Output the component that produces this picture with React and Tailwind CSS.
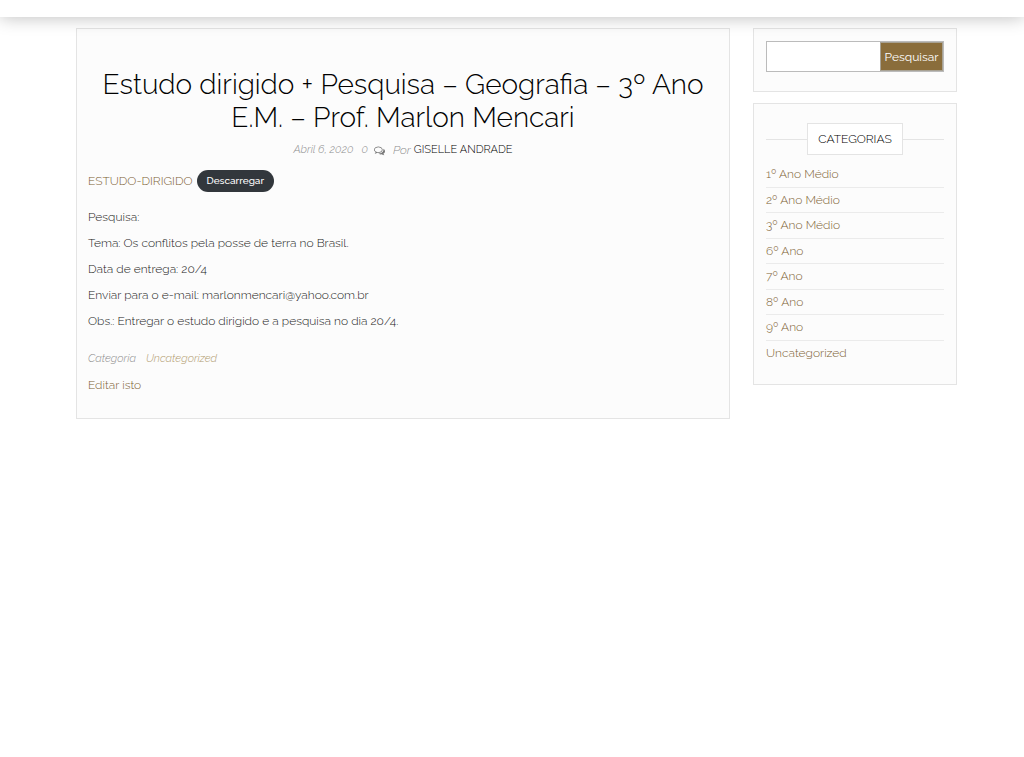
import React, { useState } from "react";

const CATEGORIES = [
  "1º Ano Médio",
  "2º Ano Médio",
  "3º Ano Médio",
  "6º Ano",
  "7º Ano",
  "8º Ano",
  "9º Ano",
  "Uncategorized",
];

const PARAGRAPHS = [
  "Pesquisa:",
  "Tema: Os conflitos pela posse de terra no Brasil.",
  "Data de entrega: 20/4",
  "Enviar para o e-mail: marlonmencari@yahoo.com.br",
  "Obs.: Entregar o estudo dirigido e a pesquisa no dia 20/4.",
];

// dois balões, o de trás preenchido
const CommentsIcon = () => (
  <svg viewBox="0 0 1792 1792" className="size-[11px] fill-[#777]" role="img" aria-label="comentários">
    <path d="M704 384q-153 0-286 52t-211.500 141-78.500 191q0 82 53 158t149 132l97 56-35 84q34-20 62-39l44-31 53 10q78 14 153 14 153 0 286-52t211.500-141 78.500-191-78.500-191-211.500-141-286-52zm0-128q191 0 353.500 68.500t256.500 186.500 94 257-94 257-256.500 186.500-353.500 68.500q-86 0-176-16-124 88-278 128-36 9-86 16h-3q-11 0-20.500-8t-11.500-21q-1-3-1-6.500t.5-6.500 2-6l2.500-5 3.500-5.500 4-5 4.500-5 4-4.500q5-6 23-25t26-29.500 22.500-29 25-38.500 20.500-44q-124-72-195-177t-71-224q0-139 94-257t256.500-186.500 353.500-68.500zm822 1169q10 24 20.500 44t25 38.500 22.500 29 26 29.500 23 25q1 1 4 4.500t4.500 5 4 5 3.500 5.500l2.500 5 2 6 .5 6.500-1 6.500q-3 14-13 22t-22 7q-50-7-86-16-154-40-278-128-90 16-176 16-271 0-472-132 58 4 88 4 161 0 309-45t264-129q125-92 192-212t67-254q0-77-23-152 129 71 204 178t75 230q0 120-71 224.500t-195 176.500z" />
  </svg>
);

const Post = () => (
  <article className="min-w-0 flex-1 border border-[#e4e4e4] bg-[#fcfcfc] px-[11px] pt-[39px] pb-5">
    <h1 className="text-center text-[28px] leading-[33px] font-light text-black">
      Estudo dirigido + Pesquisa – Geografia – 3º Ano E.M. – Prof. Marlon Mencari
    </h1>

    <div className="mt-1.5 flex items-center justify-center text-[11px] leading-5 font-light text-[#8c8c8c]">
      <time dateTime="2020-04-06" className="italic">Abril 6, 2020</time>
      <a href="#comments" className="ml-2 flex items-center gap-1.5 italic">
        0 <CommentsIcon />
      </a>
      <span className="ml-2 text-[12px] italic">Por</span>
      <a href="#author" className="ml-[3px] text-black">GISELLE ANDRADE</a>
    </div>

    <div className="mt-[10px] flex items-center text-[12px]">
      <a href="#estudo" className="leading-[22px] font-light text-[#7d6234]">ESTUDO-DIRIGIDO</a>
      <a
        href="#download"
        className="ml-1 rounded-full bg-[#32373c] px-[10px] text-[10px] leading-[22px] font-medium text-white"
      >
        Descarregar
      </a>
    </div>

    <div className="mt-3 text-[12px] leading-[26px] font-light text-[#222]">
      {PARAGRAPHS.map((text) => (
        <p key={text}>{text}</p>
      ))}
    </div>

    <div className="mt-3 flex gap-[10px] text-[11px] leading-[26px] font-light italic">
      <span className="text-[#8c8c8c]">Categoria</span>
      <a href="#uncategorized" className="text-[#b09a6c]">Uncategorized</a>
    </div>
    <a href="#edit" className="block text-[12px] leading-[26px] font-light text-[#7d6234]">Editar isto</a>
  </article>
);

const Search = () => {
  const [query, setQuery] = useState("");

  return (
    <section className="border border-[#e4e4e4] bg-[#fcfcfc] px-3 pt-3 pb-[19px]">
      <form
        className="flex h-[31px] border border-[#bbb] bg-white"
        onSubmit={(e) => e.preventDefault()}
      >
        <input
          type="search"
          aria-label="Pesquisar por"
          value={query}
          onChange={(e) => setQuery(e.target.value)}
          className="min-w-0 flex-1 px-2 text-[12px] outline-none"
        />
        <button
          type="submit"
          className="w-[63px] border border-[#a8a294] bg-[#8a6d3b] text-center text-[12px] text-white"
        >
          Pesquisar
        </button>
      </form>
    </section>
  );
};

const Categories = () => (
  <section className="mt-[11px] border border-[#e4e4e4] bg-[#fcfcfc] px-3 pt-[19px] pb-[18px]">
    {/* título centrado entre duas linhas */}
    <div className="flex items-center">
      <span className="h-px flex-1 bg-[#e4e4e4]" />
      <h3 className="w-24 border border-[#e4e4e4] bg-white text-center text-[12px] leading-[30px] font-light text-black">
        CATEGORIAS
      </h3>
      <span className="h-px flex-1 bg-[#e4e4e4]" />
    </div>
    <ul className="mt-[7px] grid min-h-[204px] auto-rows-fr text-[12px] leading-6 font-light">
      {CATEGORIES.map((name) => (
        <li key={name} className="border-b border-[#ebebeb] last:border-b-0">
          <a href="#category" className="text-[#7d6234]">{name}</a>
        </li>
      ))}
    </ul>
  </section>
);

const App = () => (
  <div className="min-h-screen bg-white font-['Raleway','Lato',sans-serif]">
    <header className="relative z-10 h-[17px] bg-white shadow-[0_0_18px_rgba(0,0,0,0.28)]" />
    <main className="flex items-start gap-[23px] pt-[11px] pr-[67px] pl-[76px]">
      <Post />
      <aside className="w-[204px] shrink-0">
        <Search />
        <Categories />
      </aside>
    </main>
  </div>
);

export default App;
